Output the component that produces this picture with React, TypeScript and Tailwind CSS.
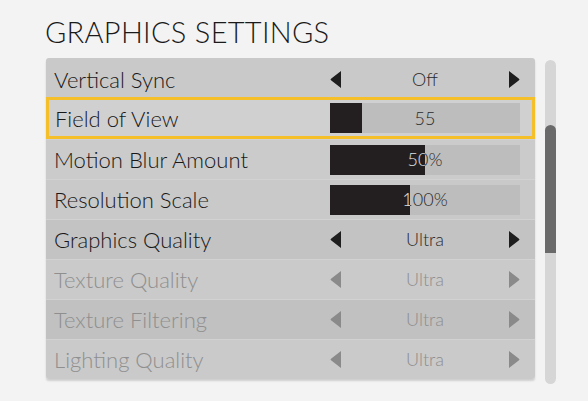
import type {ReactNode} from 'react'

type Row =
  | {label: string; kind: 'choice'; value: string; disabled?: boolean; bg: string}
  | {label: string; kind: 'slider'; value: string; fill: number; bg: string; active?: boolean}

const rows: Row[] = [
  {label: 'Vertical Sync', kind: 'choice', value: 'Off', bg: 'bg-[#c9c9c9]'},
  {label: 'Field of View', kind: 'slider', value: '55', fill: 32, bg: 'bg-[#d0d0d0]', active: true},
  {label: 'Motion Blur Amount', kind: 'slider', value: '50%', fill: 95, bg: 'bg-[#cbcbcb]'},
  {label: 'Resolution Scale', kind: 'slider', value: '100%', fill: 80, bg: 'bg-[#c9c9c9]'},
  {label: 'Graphics Quality', kind: 'choice', value: 'Ultra', bg: 'bg-[#c3c3c3]'},
  {label: 'Texture Quality', kind: 'choice', value: 'Ultra', disabled: true, bg: 'bg-[#cacaca]'},
  {label: 'Texture Filtering', kind: 'choice', value: 'Ultra', disabled: true, bg: 'bg-[#c1c1c1]'},
  {label: 'Lighting Quality', kind: 'choice', value: 'Ultra', disabled: true, bg: 'bg-[#cacaca]'},
]

function Arrow({dir, color}: {dir: 'left' | 'right'; color: string}) {
  return (
    <svg width="11" height="17" viewBox="0 0 11 17" className="shrink-0">
      {dir === 'left' ? (
        <path d="M11 0 L11 17 L1 9.2 Q0 8.5 1 7.8 Z" fill={color} />
      ) : (
        <path d="M0 0 L0 17 L10 9.2 Q11 8.5 10 7.8 Z" fill={color} />
      )}
    </svg>
  )
}

function Control({row}: {row: Row}): ReactNode {
  if (row.kind === 'choice') {
    const color = row.disabled ? '#8a8a8a' : '#1e1e1e'
    return (
      <div className="flex w-[190px] items-center justify-between">
        <Arrow dir="left" color={color} />
        <span className={`text-[18px] font-light ${row.disabled ? 'text-[#8e8e8e]' : 'text-[#2a2a2a]'}`}>
          {row.value}
        </span>
        <Arrow dir="right" color={color} />
      </div>
    )
  }
  return (
    <div className="relative h-[30px] w-[190px] bg-[#bdbdbd]">
      <div className="flex h-full w-full items-center justify-center text-[18px] font-light text-[#2a2a2a]">
        {row.value}
      </div>
      <div className="absolute left-0 top-0 h-full overflow-hidden bg-[#231f20]" style={{width: row.fill}}>
        <div className="flex h-full w-[190px] items-center justify-center text-[18px] font-light text-[#e0e0e0]">
          {row.value}
        </div>
      </div>
    </div>
  )
}

export default function App() {
  return (
    <div className="h-[401px] w-[588px] bg-[#f3f3f3] font-['Lato',sans-serif]">
      <div className="pl-[45px] pt-[14px]">
        <h1 className="text-[29px] font-light leading-[36px] tracking-[0.3px] text-[#1a1a1a]">GRAPHICS SETTINGS</h1>
      </div>
      <div className="mt-[8px] flex items-start pl-[46px]">
        <div className="w-[489px] overflow-hidden rounded-[3px] shadow-[0_2px_2px_rgba(0,0,0,0.15)]">
          {rows.map((row, i) => (
            <div
              key={row.label}
              className={`flex items-center ${row.bg} ${
                row.kind === 'slider' && row.active
                  ? 'h-[42px] border-[3px] border-[#f5bf2a] pl-[6px] pr-[12px]'
                  : i === 0
                    ? 'h-[39px] pl-[8px] pr-[15px] pt-[4px]'
                    : 'h-10 border-t border-[#d2d2d2] pl-[8px] pr-[15px]'
              }`}
            >
              <span
                className={`text-[22px] font-light ${
                  row.kind === 'choice' && row.disabled ? 'text-[#8f8f8f]' : 'text-[#181818]'
                }`}
              >
                {row.label}
              </span>
              <div className="ml-auto">
                <Control row={row} />
              </div>
            </div>
          ))}
        </div>
        <div className="ml-[10px] mt-[2px] h-[324px] w-[11px] rounded-full bg-[#d6d6d6] pt-[65px]">
          <div className="h-[128px] w-full rounded-t-full bg-[#6a6a6a]" />
        </div>
      </div>
    </div>
  )
}
